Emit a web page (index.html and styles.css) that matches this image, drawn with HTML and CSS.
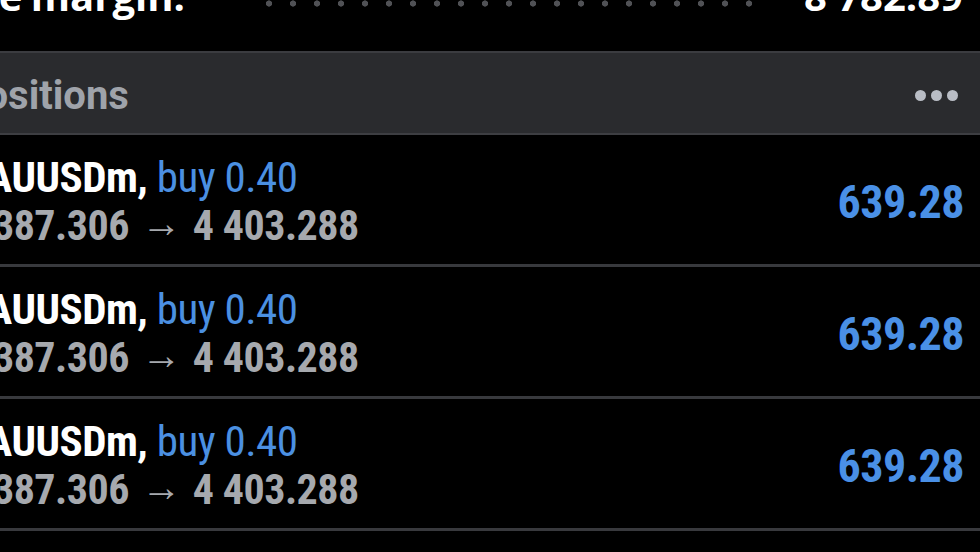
FILE: index.html
```html
<!DOCTYPE html>
<html>
<head>
<meta charset="utf-8">
<link rel="stylesheet" href="styles.css">
</head>
<body>
<div class="screen">
  <div class="summary">
    <div class="summary-row">
      <span class="sum-label">Free margin:</span>
      <span class="leader"></span>
      <span class="sum-value">8 782.89</span>
    </div>
  </div>
  <div class="section-head">
    <span class="section-title">Positions</span>
    <span class="more"><i></i><i></i><i></i></span>
  </div>
  <div class="position">
    <div class="pos-info">
      <div class="pos-line1"><span class="sym">XAUUSDm,</span> <span class="side">buy 0.40</span></div>
      <div class="pos-line2">4 387.306 <span class="arrow">→</span> 4 403.288</div>
    </div>
    <div class="pos-profit">639.28</div>
  </div>
  <div class="position">
    <div class="pos-info">
      <div class="pos-line1"><span class="sym">XAUUSDm,</span> <span class="side">buy 0.40</span></div>
      <div class="pos-line2">4 387.306 <span class="arrow">→</span> 4 403.288</div>
    </div>
    <div class="pos-profit">639.28</div>
  </div>
  <div class="position">
    <div class="pos-info">
      <div class="pos-line1"><span class="sym">XAUUSDm,</span> <span class="side">buy 0.40</span></div>
      <div class="pos-line2">4 387.306 <span class="arrow">→</span> 4 403.288</div>
    </div>
    <div class="pos-profit">639.28</div>
  </div>
</div>
</body>
</html>
```

FILE: styles.css
```css
html, body {
  margin: 0;
  padding: 0;
  background: #000;
  overflow: hidden;
}
body {
  width: 980px;
  height: 552px;
}
.screen {
  margin-left: -110px;
  width: 1090px;
  font-family: "Roboto Condensed", "Liberation Sans Narrow", Roboto, "Liberation Sans", sans-serif;
  font-stretch: condensed;
}
.summary {
  height: 51px;
  overflow: hidden;
  padding: 0 17px 0 45px;
}
.summary-row {
  display: flex;
  align-items: flex-start;
  margin-top: -28px;
  font-family: "Open Sans", "Noto Sans", sans-serif;
  font-stretch: normal;
  font-weight: 700;
  font-size: 40px;
  line-height: 48px;
  color: #fff;
}
.sum-label {
  word-spacing: -2px;
}
.leader {
  flex: 1;
  margin: 28px 40px 0 72px;
  height: 7px;
  background-image: radial-gradient(circle, #505155 2.8px, transparent 3.4px);
  background-size: 24px 7px;
  background-position: left center;
}
.section-head {
  display: flex;
  align-items: center;
  justify-content: space-between;
  height: 80px;
  padding: 0 22px 0 70px;
  background: #2a2b2e;
  border-top: 2px solid #3b3c40;
  border-bottom: 2px solid #3d3e42;
}
.section-title {
  font-family: Roboto, "Liberation Sans", sans-serif;
  font-stretch: normal;
  font-weight: 700;
  font-size: 40px;
  color: #9fa3aa;
  padding-top: 4px;
}
.more {
  display: flex;
  gap: 5px;
  padding-top: 5px;
}
.more i {
  display: block;
  width: 11px;
  height: 11px;
  border-radius: 50%;
  background: #b9bdc5;
}
.position {
  display: flex;
  align-items: center;
  justify-content: space-between;
  height: 129px;
  padding: 0 16px 0 73px;
  border-bottom: 3px solid #38393d;
}
.pos-info {
  display: flex;
  flex-direction: column;
  padding-top: 3px;
}
.pos-line1 {
  font-size: 43px;
  line-height: 46px;
  letter-spacing: -0.5px;
}
.sym {
  color: #fff;
  font-weight: 700;
}
.side {
  color: #4b90e2;
  font-weight: 400;
}
.pos-line2 {
  margin-top: 1px;
  font-size: 42px;
  line-height: 46px;
  font-weight: 700;
  color: #a6a9ae;
  letter-spacing: -0.5px;
}
.arrow {
  display: inline-block;
  margin: 0 3px;
  font-size: 40px;
  font-weight: 400;
  vertical-align: 3px;
}
.pos-profit {
  font-size: 46px;
  font-weight: 700;
  color: #4a90e6;
  letter-spacing: -0.5px;
  padding-top: 4px;
}
```
